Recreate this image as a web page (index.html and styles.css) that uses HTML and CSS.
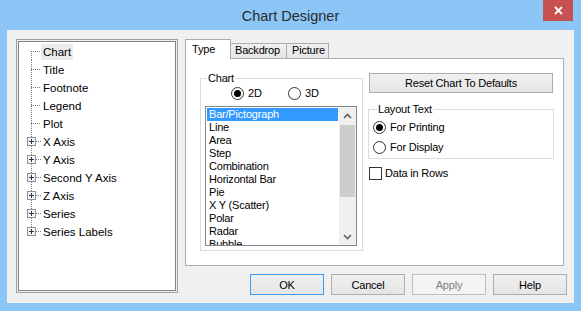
FILE: index.html
```html
<!DOCTYPE html>
<html lang="en">
<head>
    <meta charset="UTF-8">
    <title>Chart Designer</title>
    <link rel="stylesheet" href="styles.css">
</head>
<body>
    <div class="window">
        <div class="titlebar">
            <span class="title">Chart Designer</span>
            <button class="close">
                <svg width="9" height="9" viewBox="0 0 9 9"><path d="M1 1L8 8M8 1L1 8" stroke="#fff" stroke-width="1.8"/></svg>
            </button>
        </div>

        <div class="client">
            <!-- Tree of chart parts -->
            <div class="tree-frame">
                <ul class="tree">
                    <li class="selected">
                        <svg viewBox="0 0 22 18"><path class="dots" d="M12.5 9V18M12 9.5H22"/></svg>
                        <span class="label">Chart</span>
                    </li>
                    <li>
                        <svg viewBox="0 0 22 18"><path class="dots" d="M12.5 0V18M12 9.5H22"/></svg>
                        <span class="label">Title</span>
                    </li>
                    <li>
                        <svg viewBox="0 0 22 18"><path class="dots" d="M12.5 0V18M12 9.5H22"/></svg>
                        <span class="label">Footnote</span>
                    </li>
                    <li>
                        <svg viewBox="0 0 22 18"><path class="dots" d="M12.5 0V18M12 9.5H22"/></svg>
                        <span class="label">Legend</span>
                    </li>
                    <li>
                        <svg viewBox="0 0 22 18"><path class="dots" d="M12.5 0V18M12 9.5H22"/></svg>
                        <span class="label">Plot</span>
                    </li>
                    <li>
                        <svg viewBox="0 0 22 18"><path class="dots" d="M12.5 0V18M17 9.5H22"/><rect class="plus-box" x="8.5" y="5.5" width="8" height="8"/><path class="plus" d="M10 9.5H15M12.5 7V12"/></svg>
                        <span class="label">X Axis</span>
                    </li>
                    <li>
                        <svg viewBox="0 0 22 18"><path class="dots" d="M12.5 0V18M17 9.5H22"/><rect class="plus-box" x="8.5" y="5.5" width="8" height="8"/><path class="plus" d="M10 9.5H15M12.5 7V12"/></svg>
                        <span class="label">Y Axis</span>
                    </li>
                    <li>
                        <svg viewBox="0 0 22 18"><path class="dots" d="M12.5 0V18M17 9.5H22"/><rect class="plus-box" x="8.5" y="5.5" width="8" height="8"/><path class="plus" d="M10 9.5H15M12.5 7V12"/></svg>
                        <span class="label">Second Y Axis</span>
                    </li>
                    <li>
                        <svg viewBox="0 0 22 18"><path class="dots" d="M12.5 0V18M17 9.5H22"/><rect class="plus-box" x="8.5" y="5.5" width="8" height="8"/><path class="plus" d="M10 9.5H15M12.5 7V12"/></svg>
                        <span class="label">Z Axis</span>
                    </li>
                    <li>
                        <svg viewBox="0 0 22 18"><path class="dots" d="M12.5 0V18M17 9.5H22"/><rect class="plus-box" x="8.5" y="5.5" width="8" height="8"/><path class="plus" d="M10 9.5H15M12.5 7V12"/></svg>
                        <span class="label">Series</span>
                    </li>
                    <li>
                        <svg viewBox="0 0 22 18"><path class="dots" d="M12.5 0V9M17 9.5H22"/><rect class="plus-box" x="8.5" y="5.5" width="8" height="8"/><path class="plus" d="M10 9.5H15M12.5 7V12"/></svg>
                        <span class="label">Series Labels</span>
                    </li>
                </ul>
            </div>

            <div class="main">
                <div class="tabs">
                    <div class="tab active">Type</div>
                    <div class="tab backdrop">Backdrop</div>
                    <div class="tab picture">Picture</div>
                </div>

                <div class="panel">
                    <div class="group chart-group">
                        <span class="group-label">Chart</span>
                        <div class="radio-row">
                            <span class="radio on"><span class="circle"></span>2D</span>
                            <span class="radio"><span class="circle"></span>3D</span>
                        </div>
                        <div class="listbox">
                            <ul class="list">
                                <li class="sel">Bar/Pictograph</li>
                                <li>Line</li>
                                <li>Area</li>
                                <li>Step</li>
                                <li>Combination</li>
                                <li>Horizontal Bar</li>
                                <li>Pie</li>
                                <li>X Y (Scatter)</li>
                                <li>Polar</li>
                                <li>Radar</li>
                                <li>Bubble</li>
                            </ul>
                            <div class="scrollbar">
                                <div class="sb-btn">
                                    <svg width="9" height="6" viewBox="0 0 9 6"><path d="M1 5L4.5 1.5L8 5" fill="none" stroke="#606060" stroke-width="1.6"/></svg>
                                </div>
                                <div class="thumb"></div>
                                <div class="track"></div>
                                <div class="sb-btn">
                                    <svg width="9" height="6" viewBox="0 0 9 6"><path d="M1 1L4.5 4.5L8 1" fill="none" stroke="#606060" stroke-width="1.6"/></svg>
                                </div>
                            </div>
                        </div>
                    </div>

                    <div class="side">
                        <button class="btn reset">Reset Chart To Defaults</button>
                        <div class="group layout-group">
                            <span class="group-label">Layout Text</span>
                            <span class="radio on first"><span class="circle"></span>For Printing</span>
                            <span class="radio second"><span class="circle"></span>For Display</span>
                        </div>
                        <label class="check"><span class="box"></span>Data in Rows</label>
                    </div>
                </div>

                <div class="buttons">
                    <button class="btn default">OK</button>
                    <button class="btn">Cancel</button>
                    <button class="btn" disabled>Apply</button>
                    <button class="btn">Help</button>
                </div>
            </div>
        </div>
    </div>
</body>
</html>
```

FILE: styles.css
```css
* {
    box-sizing: border-box;
}

body {
    margin: 0;
    font-family: 'Liberation Sans', Arial, sans-serif;
    font-size: 11px;
    letter-spacing: -0.2px;
    color: #000;
}

.window {
    width: 581px;
    height: 311px;
    background: #8bc6f7;
    display: flex;
    flex-direction: column;
}

/* Title bar */
.titlebar {
    height: 30px;
    display: flex;
    align-items: flex-start;
    padding: 0 8px 0 38px;
}

.title {
    flex: 1;
    text-align: center;
    font-size: 14.5px;
    letter-spacing: 0;
    line-height: 33px;
    color: #2b2b2b;
}

.close {
    width: 30px;
    height: 21px;
    border: none;
    padding: 0;
    background: #c75050;
    display: flex;
    align-items: center;
    justify-content: center;
}

/* Client area */
.client {
    flex: 1;
    margin: 0 7px 8px;
    background: #f0f0f0;
    display: flex;
    padding: 9px 8px 8px 9px;
}

/* Tree */
.tree-frame {
    width: 162px;
    height: 254px;
    border: 1px solid #a0a0a0;
    padding: 1px;
}

.tree {
    height: 100%;
    margin: 0;
    padding: 0;
    list-style: none;
    background: #fff;
    border: 1px solid #828282;
    font-size: 11.5px;
    letter-spacing: 0;
}

.tree li {
    height: 18px;
    display: flex;
    align-items: center;
}

.tree svg {
    width: 22px;
    height: 18px;
    flex: none;
}

.tree .dots {
    fill: none;
    stroke: #7a7a7a;
    stroke-width: 1;
    stroke-dasharray: 1 1;
    shape-rendering: crispEdges;
}

.tree .plus-box {
    fill: #f4f4f4;
    stroke: #919191;
    shape-rendering: crispEdges;
}

.tree .plus {
    stroke: #1e395b;
    stroke-width: 1;
    shape-rendering: crispEdges;
}

.tree .label {
    padding: 0 2px;
    line-height: 16px;
    margin-top: 1px;
}

.tree .selected .label {
    background: #ebebeb;
}

/* Right column */
.main {
    flex: 1;
    margin-left: 7px;
    display: flex;
    flex-direction: column;
}

.tabs {
    height: 19px;
    display: flex;
    align-items: flex-end;
}

.tab {
    height: 15px;
    padding-left: 4px;
    border: 1px solid #acacac;
    border-bottom: none;
    background: linear-gradient(#f0f0f0, #e5e5e5);
    line-height: 13px;
    margin-left: -1px;
}

.tab.active {
    width: 46px;
    height: 20px;
    margin: 0 0 -1px 0;
    padding-left: 6px;
    background: #fff;
    line-height: 18px;
    position: relative;
    z-index: 1;
}

.tab.backdrop {
    width: 57px;
}

.tab.picture {
    width: 43px;
    padding-left: 5px;
}

.panel {
    width: 379px;
    height: 208px;
    border: 1px solid #adadad;
    background: #fff;
    display: flex;
    align-items: flex-start;
    padding: 14px 0 0 14px;
}

/* Group boxes */
.group {
    border: 1px solid #dcdcdc;
}

.group-label {
    display: block;
    width: fit-content;
    margin: -7px 0 0 6px;
    padding: 0 1px;
    background: #fff;
    line-height: 13px;
}

.chart-group {
    width: 163px;
    height: 173px;
    margin-top: 5px;
}

.radio-row {
    display: flex;
    margin: 2px 0 0 30px;
}

.radio {
    display: flex;
    align-items: center;
    gap: 4px;
    height: 13px;
    line-height: 13px;
}

.radio-row .radio:first-child {
    width: 57px;
}

.circle {
    width: 13px;
    height: 13px;
    border: 1px solid #333;
    border-radius: 50%;
    background: #fff;
    display: flex;
    align-items: center;
    justify-content: center;
}

.radio.on .circle::after {
    content: "";
    width: 7px;
    height: 7px;
    border-radius: 50%;
    background: #000;
}

/* List box */
.listbox {
    width: 152px;
    height: 140px;
    margin: 6px 0 0 4px;
    border: 1px solid #828790;
    display: flex;
}

.list {
    flex: 1;
    margin: 0;
    padding: 1px 1px 0;
    list-style: none;
    overflow: hidden;
}

.list li {
    height: 13px;
    line-height: 13px;
    padding-left: 2px;
    white-space: nowrap;
}

.list li.sel {
    background: #3399ff;
    color: #fff;
}

.scrollbar {
    width: 17px;
    background: #f0f0f0;
    display: flex;
    flex-direction: column;
}

.sb-btn {
    height: 17px;
    display: flex;
    align-items: center;
    justify-content: center;
}

.thumb {
    height: 72px;
    margin: 1px 1px 0;
    background: #cdcdcd;
}

.track {
    flex: 1;
}

/* Side controls */
.side {
    width: 186px;
    margin-left: 5px;
    display: flex;
    flex-direction: column;
    align-items: flex-start;
}

.btn {
    width: 74px;
    height: 21px;
    padding: 0;
    border: 1px solid #acacac;
    background: linear-gradient(#f0f0f0, #e5e5e5);
    font-family: inherit;
    font-size: 11px;
    letter-spacing: -0.2px;
    color: #000;
}

.btn.reset {
    width: 184px;
    height: 20px;
    margin-left: 1px;
}

.btn.default {
    border-color: #3c9cf0;
}

.btn:disabled {
    color: #838383;
    border-color: #bfbfbf;
    background: #f4f4f4;
}

.layout-group {
    width: 186px;
    height: 50px;
    margin-top: 16px;
}

.layout-group .group-label {
    margin-left: 8px;
}

.layout-group .radio {
    margin-left: 4px;
}

.layout-group .first {
    margin-top: 5px;
}

.layout-group .second {
    margin-top: 7px;
}

.check {
    margin: 8px 0 0 1px;
    display: flex;
    align-items: center;
    gap: 3px;
    line-height: 13px;
}

.check .box {
    width: 13px;
    height: 13px;
    border: 1px solid #333;
    background: #fff;
}

/* Dialog buttons */
.buttons {
    display: flex;
    justify-content: flex-end;
    gap: 7px;
    margin: 8px -1px 0 0;
}
```
